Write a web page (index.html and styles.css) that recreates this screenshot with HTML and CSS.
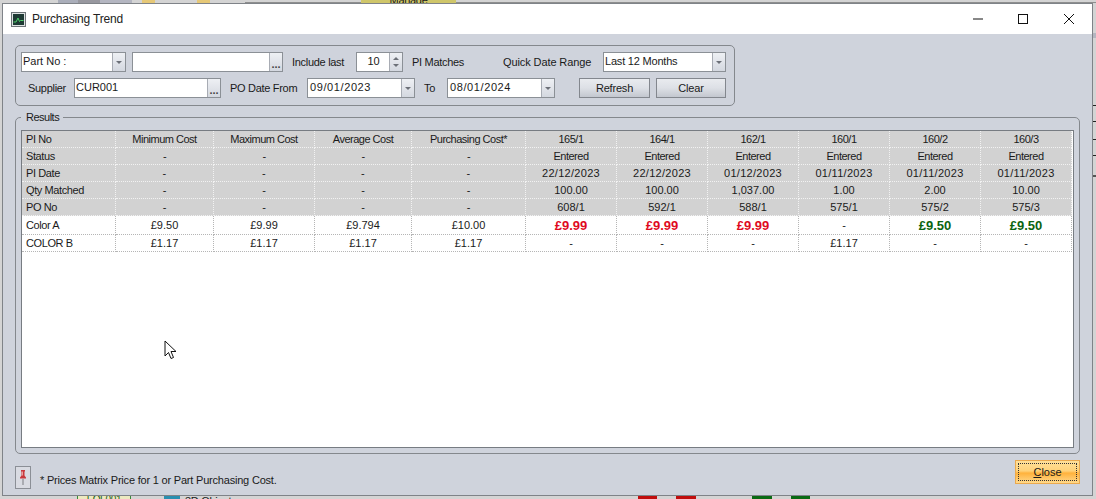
FILE: index.html
```html
<!DOCTYPE html>
<html lang="en">
<head>
<meta charset="utf-8">
<title>Purchasing Trend</title>
<link rel="stylesheet" href="styles.css">
</head>
<body>
<div class="desk">
  <i class="bg tab1"></i><i class="bg tab2"></i><i class="bg tab3"></i>
  <i class="bg gold1"></i><i class="bg gold2"></i><i class="bg topline"></i>
  <span class="bg manage">Manage</span>
  <span class="bg fol">FOL001</span>
  <i class="bg blue3d"></i><span class="bg obj3d">3D Objects</span>
  <i class="bg red1"></i><i class="bg red2"></i><i class="bg green1"></i><i class="bg green2"></i>
  <i class="bg rs1"></i><i class="bg rs2"></i><i class="bg rs3"></i><i class="bg rs4"></i><i class="bg rs5"></i><i class="bg rs6"></i>

  <div class="window">
    <header class="titlebar">
      <svg class="appicon" width="15" height="15" viewBox="0 0 15 15">
        <rect x="0.5" y="0.5" width="14" height="14" fill="#dfe3e3" stroke="#6d7478"/>
        <rect x="2" y="2" width="11" height="11" fill="#1e3a34"/>
        <path d="M2.500 10H5L7 6l1.500 3.500 1-1H12.500" fill="none" stroke="#4fd06a" stroke-width="1"/>
      </svg>
      <span class="title">Purchasing Trend</span>
      <div class="winbtns">
        <svg class="wb" width="46" height="30" viewBox="0 0 46 30"><path d="M19 15h10" stroke="#111" stroke-width="1"/></svg>
        <svg class="wb" width="46" height="30" viewBox="0 0 46 30"><rect x="18.500" y="10.500" width="9" height="9" fill="none" stroke="#111"/></svg>
        <svg class="wb" width="46" height="30" viewBox="0 0 46 30"><path d="M18 10l10 10M28 10l-10 10" stroke="#111" stroke-width="1"/></svg>
      </div>
    </header>

    <div class="content">
      <section class="filters">
        <div class="frow">
          <div class="combo w105"><span class="val">Part No :</span><span class="drop"><i class="caret"></i></span></div>
          <div class="combo w151 ml6"><span class="val"></span><span class="dots">...</span></div>
          <label class="lab ml9 w64">Include last</label>
          <div class="combo w47"><span class="val center">10</span><span class="spin"><i class="up"></i><i class="down"></i></span></div>
          <label class="lab ml9 w91">PI Matches</label>
          <label class="lab w100 wide">Quick Date Range</label>
          <div class="combo w123"><span class="val tight">Last 12 Months</span><span class="drop"><i class="caret"></i></span></div>
        </div>
        <div class="frow">
          <label class="lab w53 pl7">Supplier</label>
          <div class="combo w147"><span class="val">CUR001</span><span class="dots">...</span></div>
          <label class="lab ml9 w77">PO Date From</label>
          <div class="combo w108"><span class="val date">09/01/2023</span><span class="drop"><i class="caret"></i></span></div>
          <label class="lab ml9 w23">To</label>
          <div class="combo w108"><span class="val date">08/01/2024</span><span class="drop"><i class="caret"></i></span></div>
          <button class="btn ml24 w71">Refresh</button>
          <button class="btn ml6 w70">Clear</button>
        </div>
      </section>

      <fieldset class="results">
        <legend>Results</legend>
        <div class="gridbox">
          <table class="matrix">
            <colgroup>
              <col class="c1"><col class="c2"><col class="c3"><col class="c4"><col class="c5">
              <col class="c6"><col class="c6"><col class="c6"><col class="c6"><col class="c6"><col class="c6">
            </colgroup>
            <tbody>
              <tr class="hd"><td>PI No</td><td>Minimum Cost</td><td>Maximum Cost</td><td>Average Cost</td><td>Purchasing Cost*</td><td>165/1</td><td>164/1</td><td>162/1</td><td>160/1</td><td>160/2</td><td>160/3</td></tr>
              <tr class="hd"><td>Status</td><td>-</td><td>-</td><td>-</td><td>-</td><td>Entered</td><td>Entered</td><td>Entered</td><td>Entered</td><td>Entered</td><td>Entered</td></tr>
              <tr class="hd dt"><td>PI Date</td><td>-</td><td>-</td><td>-</td><td>-</td><td>22/12/2023</td><td>22/12/2023</td><td>01/12/2023</td><td>01/11/2023</td><td>01/11/2023</td><td>01/11/2023</td></tr>
              <tr class="hd num"><td>Qty Matched</td><td>-</td><td>-</td><td>-</td><td>-</td><td>100.00</td><td>100.00</td><td>1,037.00</td><td>1.00</td><td>2.00</td><td>10.00</td></tr>
              <tr class="hd num"><td>PO No</td><td>-</td><td>-</td><td>-</td><td>-</td><td>608/1</td><td>592/1</td><td>588/1</td><td>575/1</td><td>575/2</td><td>575/3</td></tr>
              <tr class="rowa num"><td>Color A</td><td>£9.50</td><td>£9.99</td><td>£9.794</td><td>£10.00</td><td class="hi">£9.99</td><td class="hi">£9.99</td><td class="hi">£9.99</td><td>-</td><td class="lo">£9.50</td><td class="lo">£9.50</td></tr>
              <tr class="rowb num"><td>COLOR B</td><td>£1.17</td><td>£1.17</td><td>£1.17</td><td>£1.17</td><td>-</td><td>-</td><td>-</td><td>£1.17</td><td>-</td><td>-</td></tr>
            </tbody>
          </table>
        </div>
      </fieldset>

      <footer class="foot">
        <button class="pin" aria-label="Pin">
          <svg width="10" height="18" viewBox="0 0 10 18">
            <path d="M3 1h4v1L6.500 3v3.500L8 8.500V9.500H2V8.500L3.500 6.500V3L3 2z" fill="#c8383c"/>
            <path d="M4.500 2.500v4" stroke="#ef9a9a" stroke-width="1"/>
            <path d="M5 10v6" stroke="#9a9da2" stroke-width="1.500"/>
          </svg>
        </button>
        <span class="note">* Prices Matrix Price for 1 or Part Purchasing Cost.</span>
        <button class="close"><span class="focus"><u>C</u>lose</span></button>
      </footer>
    </div>
  </div>

  <svg class="cursor" width="13" height="20" viewBox="0 0 13 20">
    <path d="M1 1v15l3.500-3.500 2.500 6 2.500-1-2.500-6H12z" fill="#fff" stroke="#111" stroke-width="1"/>
  </svg>
</div>
</body>
</html>
```

FILE: styles.css
```css
* { box-sizing: border-box; }
html, body { margin: 0; padding: 0; }
body {
  width: 1096px;
  height: 499px;
  overflow: hidden;
  font-family: "Liberation Sans", Arial, sans-serif;
  font-size: 11px;
  letter-spacing: -0.3px;
  color: #1a1a1a;
}

/* desktop behind the dialog */
.desk { position: relative; width: 1096px; height: 499px; background: #d4d4d4; overflow: hidden; }
.bg { position: absolute; display: block; }
.tab1 { left: 58px; top: 0; width: 20px; height: 3px; background: #aaaeba; }
.tab2 { left: 78px; top: 0; width: 22px; height: 3px; background: #98989f; }
.tab3 { left: 100px; top: 0; width: 32px; height: 3px; background: #b4b6c1; }
.gold1 { left: 142px; top: 0; width: 13px; height: 3px; background: #e6c877; }
.gold2 { left: 197px; top: 0; width: 13px; height: 3px; background: #e6c877; }
.topline { left: 245px; top: 2px; width: 851px; height: 1px; background: #8e8e8e; }
.manage { left: 361px; top: 0; width: 95px; height: 3px; background: #cfc66a; overflow: hidden; font-size: 11px; line-height: 1px; text-align: center; }
.fol { left: 77px; top: 495px; width: 54px; height: 4px; background: #ece9c0; border-left: 1px solid #3a8a3a; border-right: 1px solid #3a8a3a; color: #1c5c1c; font-size: 10px; line-height: 10px; text-align: center; overflow: hidden; }
.blue3d { left: 164px; top: 496px; width: 16px; height: 3px; background: #2a8fb0; }
.obj3d { left: 185px; top: 496px; width: 56px; height: 3px; font-size: 11px; line-height: 10px; overflow: hidden; }
.red1 { left: 638px; top: 495px; width: 19px; height: 4px; background: #c00d0d; }
.red2 { left: 676px; top: 495px; width: 20px; height: 4px; background: #c00d0d; }
.green1 { left: 752px; top: 495px; width: 20px; height: 4px; background: #0a6a14; }
.green2 { left: 791px; top: 495px; width: 19px; height: 4px; background: #0a6a14; }
.rs1 { left: 1092px; top: 33px; width: 4px; height: 5px; background: #b4b6c0; }
.rs2 { left: 1092px; top: 105px; width: 4px; height: 1px; background: #222; }
.rs3 { left: 1092px; top: 121px; width: 4px; height: 1px; background: #222; }
.rs4 { left: 1092px; top: 139px; width: 4px; height: 1px; background: #222; }
.rs5 { left: 1092px; top: 155px; width: 4px; height: 1px; background: #222; }
.rs6 { left: 1092px; top: 175px; width: 4px; height: 2px; background: #555; }

/* dialog */
.window {
  position: absolute;
  left: 2px;
  top: 3px;
  width: 1091px;
  height: 493px;
  background: #cfd3dc;
  border: 1px solid #7f8388;
  display: flex;
  flex-direction: column;
}
.titlebar {
  height: 30px;
  flex: none;
  background: #fff;
  display: flex;
  align-items: center;
  padding-left: 8px;
}
.appicon { flex: none; }
.title { margin-left: 6px; font-size: 12px; letter-spacing: -0.2px; color: #222; }
.winbtns { margin-left: auto; display: flex; }
.wb { display: block; }

.content { flex: 1; display: flex; flex-direction: column; padding: 11px 12px 0 12px; }

/* filter group */
.filters {
  width: 720px;
  height: 61px;
  border: 1px solid #84888d;
  border-radius: 5px;
  padding: 6px 0 0 5px;
  display: flex;
  flex-direction: column;
  gap: 6px;
}
.frow { display: flex; height: 20px; align-items: stretch; }
.lab { display: flex; align-items: center; flex: none; white-space: nowrap; }
.wide { letter-spacing: -0.1px; }
.combo {
  flex: none;
  display: flex;
  background: #fff;
  border: 1px solid #8b9096;
}
.val { flex: 1; padding-left: 1px; line-height: 17px; white-space: nowrap; letter-spacing: 0; }
.tight { letter-spacing: -0.2px; }
.date { letter-spacing: 0.6px; padding-left: 2px; }
.center { text-align: center; }
.drop, .dots, .spin {
  flex: none;
  width: 13px;
  background: linear-gradient(#eef0f4, #d4d8e0);
  border-left: 1px solid #a8acb4;
}
.drop { display: flex; align-items: center; justify-content: center; }
.caret { width: 0; height: 0; border-left: 3px solid transparent; border-right: 3px solid transparent; border-top: 3px solid #6c7078; }
.dots { text-align: center; font-size: 11px; line-height: 22px; font-weight: bold; color: #444; letter-spacing: 0; }
.spin { display: flex; flex-direction: column; align-items: center; justify-content: space-around; padding: 2px 0; }
.up { width: 0; height: 0; border-left: 3px solid transparent; border-right: 3px solid transparent; border-bottom: 3px solid #6c7078; }
.down { width: 0; height: 0; border-left: 3px solid transparent; border-right: 3px solid transparent; border-top: 3px solid #6c7078; }

.btn {
  flex: none;
  height: 20px;
  padding: 0;
  font: inherit;
  letter-spacing: -0.2px;
  color: #1a1a1a;
  border: 1px solid #83878e;
  background: linear-gradient(#e9ebef 0, #dde0e6 50%, #c3c7cf 100%);
}

.w23 { width: 23px; } .w47 { width: 47px; } .w53 { width: 46px; } .w64 { width: 64px; }
.w70 { width: 70px; } .w71 { width: 71px; } .w77 { width: 77px; } .w91 { width: 91px; }
.w100 { width: 100px; } .w105 { width: 105px; } .w108 { width: 108px; } .w123 { width: 123px; }
.w147 { width: 147px; } .w151 { width: 151px; }
.ml6 { margin-left: 6px; } .ml9 { margin-left: 9px; } .ml24 { margin-left: 24px; }
.pl7 { margin-left: 7px; }

/* results group */
.results {
  margin: 5px 0 0 0;
  padding: 6px 5px 5px 5px;
  width: 1065px;
  height: 343px;
  border: 1px solid #84888d;
  border-radius: 5px;
  min-width: 0;
}
.results legend { margin-left: 0; padding: 0 4px 0 5px; font-size: 11px; line-height: 13px; letter-spacing: -0.5px; }

.gridbox { background: #fff; border: 1px solid #777c82; height: 318px; }
.matrix { border-collapse: separate; border-spacing: 0; table-layout: fixed; width: 1049px; font-size: 11px; letter-spacing: -0.5px; }
.c1 { width: 94px; } .c2 { width: 98px; } .c3 { width: 101px; } .c4 { width: 97px; } .c5 { width: 114px; } .c6 { width: 91px; }
.matrix td {
  height: 17px;
  padding: 0;
  text-align: center;
  white-space: nowrap;
  overflow: hidden;
  border-right: 1px dotted #b5b5b5;
  border-bottom: 1px dotted #b5b5b5;
  line-height: 15px;
}
.matrix td:first-child { text-align: left; padding-left: 4px; letter-spacing: -0.4px; }
.hd td { background: #d2d2d2; border-color: #f2f2f2; }
.dt { letter-spacing: 0.3px; }
.num { letter-spacing: 0; }
.rowa td { height: 19px; }
.hi { color: #df0a1e; font-weight: bold; font-size: 13px; letter-spacing: 0; }
.lo { color: #0a6410; font-weight: bold; font-size: 13px; letter-spacing: 0; }

/* footer */
.foot { display: flex; align-items: flex-start; height: 40px; }
.pin {
  flex: none;
  width: 16px;
  height: 23px;
  margin-top: 12px;
  padding: 2px 0 0;
  border: 1px solid #8b8f96;
  background: #d9dbe2;
  display: flex;
  justify-content: center;
  align-items: flex-start;
}
.note { margin-left: 9px; margin-top: 20px; letter-spacing: -0.2px; }
.close {
  margin-left: auto;
  margin-top: 6px;
  width: 65px;
  height: 24px;
  padding: 2px;
  font: inherit;
  letter-spacing: 0;
  color: #1a1a1a;
  border: 1px solid #eaa94e;
  background: linear-gradient(#ffe09a 0, #ffd27a 45%, #ffb23c 55%, #ffd98c 100%);
}
.focus { display: flex; align-items: center; justify-content: center; width: 100%; height: 100%; border: 1px dotted #333; }

/* mouse pointer, on top of everything */
.cursor { position: absolute; left: 164px; top: 340px; }
```
